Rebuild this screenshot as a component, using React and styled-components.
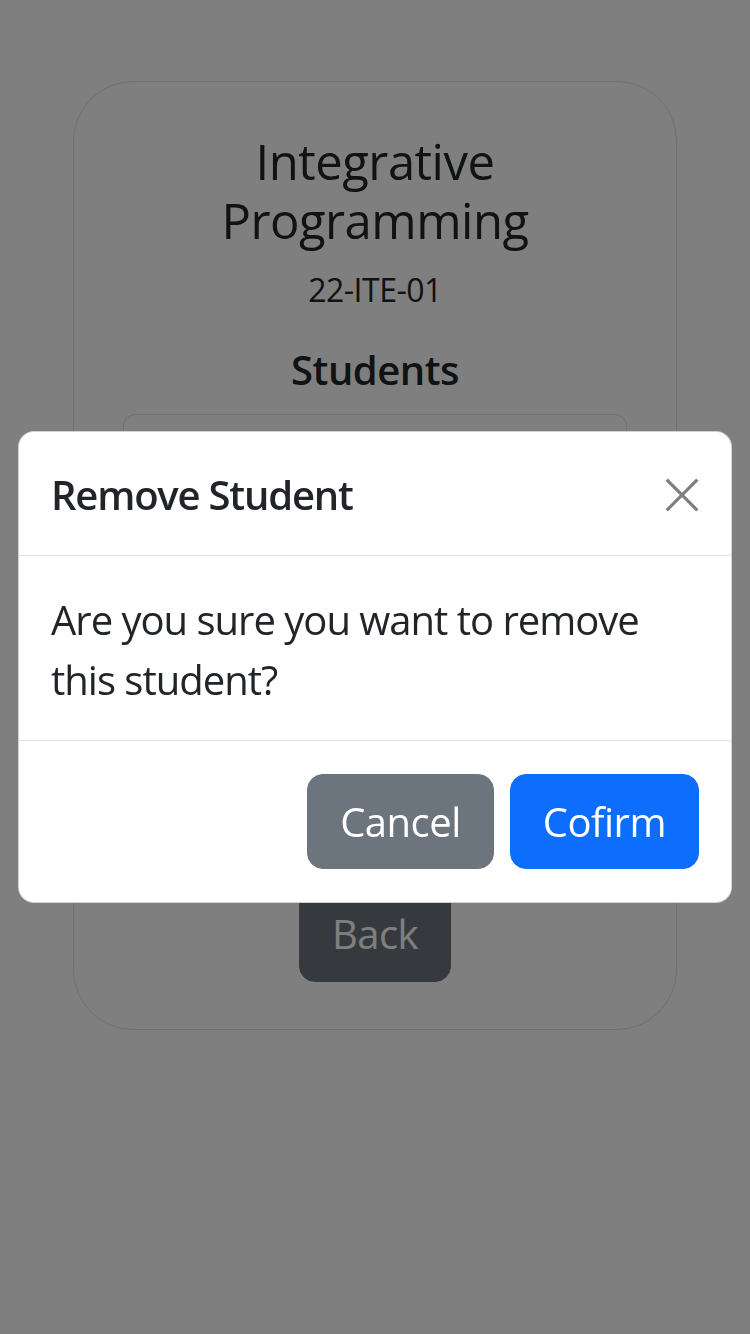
import React from 'react';
import styled, { createGlobalStyle } from 'styled-components';

const GlobalStyle = createGlobalStyle`
  *, *::before, *::after {
    box-sizing: border-box;
  }
  body {
    margin: 0;
    background: #fff;
    color: #212529;
    font-family: "Open Sans", "Noto Sans", sans-serif;
  }
`;

const Page = styled.div`
  min-height: 1334px;
  padding-top: 81px;
`;

const Card = styled.div`
  width: 604px;
  margin: 0 auto;
  border: 1px solid #dee2e6;
  border-radius: 60px;
  padding: 50px 49px 47px;
  display: flex;
  flex-direction: column;
  align-items: center;
  text-align: center;
`;

const CourseTitle = styled.h2`
  margin: 0 0 16px;
  font-size: 49px;
  font-weight: 500;
  line-height: 1.2;
  letter-spacing: -0.5px;
`;

const Section = styled.p`
  margin: 0 0 32px;
  font-size: 32px;
  line-height: 1.5;
  letter-spacing: -0.5px;
`;

const Heading = styled.h4`
  margin: 0 0 20px;
  font-size: 40px;
  font-weight: 600;
  line-height: 1.2;
  letter-spacing: -0.5px;
`;

const StudentList = styled.ul`
  align-self: stretch;
  list-style: none;
  margin: 0 0 28px;
  padding: 0;
  border: 1px solid #dee2e6;
  border-radius: 12px;
`;

const StudentRow = styled.li`
  display: flex;
  align-items: center;
  justify-content: flex-end;
  padding: 17px 36px 17px 32px;
  & + & {
    border-top: 1px solid #dee2e6;
  }
`;

const Button = styled.button`
  font-family: inherit;
  font-size: 40px;
  line-height: 1.5;
  letter-spacing: -0.5px;
  height: 95px;
  padding: 0 32px;
  border-radius: 16px;
  border: 1px solid ${p => p.$bg};
  background: ${p => p.$bg};
  color: #fff;
  cursor: pointer;
`;

const RemoveButton = styled.button`
  width: 77px;
  height: 76px;
  border-radius: 12px;
  border: 1px solid #dc3545;
  background: #dc3545;
  color: #fff;
  display: flex;
  align-items: center;
  justify-content: center;
  cursor: pointer;
`;

const Backdrop = styled.div`
  position: fixed;
  inset: 0;
  background: rgba(0, 0, 0, 0.5);
`;

const ModalWrap = styled.div`
  position: fixed;
  inset: 0;
  display: flex;
  align-items: center;
  padding: 0 18px;
`;

const Modal = styled.div`
  width: 100%;
  background: #fff;
  border: 1px solid rgba(0, 0, 0, 0.175);
  border-radius: 16px;
  display: flex;
  flex-direction: column;
`;

const ModalHeader = styled.div`
  display: flex;
  align-items: center;
  justify-content: space-between;
  padding: 33px 32px 30px;
  border-bottom: 1px solid #dee2e6;
`;

const ModalTitle = styled.h5`
  margin: 0;
  font-size: 40px;
  font-weight: 600;
  line-height: 1.5;
  letter-spacing: -1.2px;
`;

const CloseButton = styled.button`
  width: 34px;
  height: 34px;
  padding: 0;
  border: 0;
  background: transparent;
  opacity: 0.5;
  display: flex;
  cursor: pointer;
`;

const ModalBody = styled.div`
  padding: 34px 32px 30px;
  font-size: 40px;
  line-height: 1.5;
  letter-spacing: -1px;
`;

const ModalFooter = styled.div`
  display: flex;
  justify-content: flex-end;
  gap: 16px;
  padding: 33px 32px;
  border-top: 1px solid #dee2e6;
`;

const rows = [1, 2, 3, 4];

export default function App() {
  return (
    <>
      <GlobalStyle />
      <Page>
        <Card>
          <CourseTitle>Integrative Programming</CourseTitle>
          <Section>22-ITE-01</Section>
          <Heading>Students</Heading>
          <StudentList>
            {rows.map(id => (
              <StudentRow key={id}>
                <RemoveButton aria-label="Remove">
                  <svg width="28" height="28" viewBox="0 0 16 16">
                    <path d="M3 3L13 13M13 3L3 13" stroke="#fff" strokeWidth="2" fill="none" />
                  </svg>
                </RemoveButton>
              </StudentRow>
            ))}
          </StudentList>
          <Button $bg="#6c757d">Back</Button>
        </Card>
      </Page>
      <Backdrop />
      <ModalWrap>
        <Modal>
          <ModalHeader>
            <ModalTitle>Remove Student</ModalTitle>
            <CloseButton aria-label="Close">
              <svg width="34" height="34" viewBox="0 0 16 16">
                <path d="M0.8 0.8L15.2 15.2M15.2 0.8L0.8 15.2" stroke="#000" strokeWidth="1.5" fill="none" />
              </svg>
            </CloseButton>
          </ModalHeader>
          <ModalBody>Are you sure you want to remove this student?</ModalBody>
          <ModalFooter>
            <Button $bg="#6c757d">Cancel</Button>
            <Button $bg="#0d6efd">Cofirm</Button>
          </ModalFooter>
        </Modal>
      </ModalWrap>
    </>
  );
}
